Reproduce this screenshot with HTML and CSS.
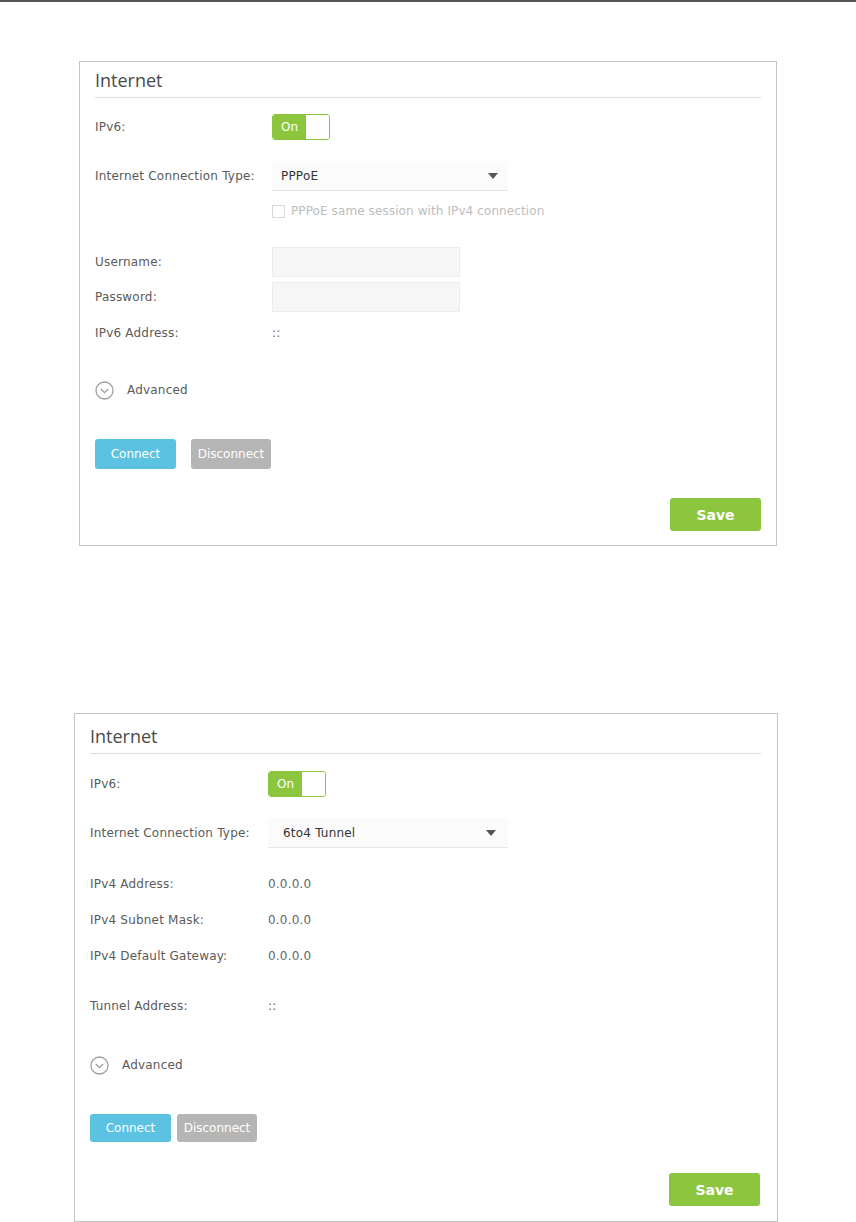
FILE: index.html
```html
<!DOCTYPE html>
<html lang="en">

<head>
    <meta charset="UTF-8">
    <title>Internet - IPv6</title>
    <link rel="stylesheet" href="styles.css">
</head>

<body>
    <div class="topline"></div>

    <!-- PPPoE -->
    <div class="panel panel-pppoe">
        <h2 class="panel-title">Internet</h2>

        <div class="row r-ipv6">
            <span class="label">IPv6:</span>
            <div class="toggle"><span class="toggle-on">On</span><span class="toggle-knob"></span></div>
        </div>

        <div class="row r-type">
            <span class="label">Internet Connection Type:</span>
            <div class="select"><span>PPPoE</span><span class="caret"></span></div>
        </div>

        <div class="row r-check">
            <span class="label"></span>
            <label class="check"><span class="box"></span>PPPoE same session with IPv4 connection</label>
        </div>

        <div class="row r-user">
            <span class="label">Username:</span>
            <input type="text" class="field">
        </div>

        <div class="row r-pass">
            <span class="label">Password:</span>
            <input type="password" class="field">
        </div>

        <div class="row r-addr">
            <span class="label">IPv6 Address:</span>
            <span class="value">::</span>
        </div>

        <div class="advanced r-adv">
            <svg width="19" height="19" viewBox="0 0 19 19">
                <circle cx="9.5" cy="9.5" r="8.5" fill="none" stroke="#a39e99" stroke-width="1.3"/>
                <path d="M5.8 8 L9.5 11.6 L13.2 8" fill="none" stroke="#a39e99" stroke-width="1.3"/>
            </svg>
            <span>Advanced</span>
        </div>

        <div class="buttons r-btn">
            <button class="btn btn-connect">Connect</button>
            <button class="btn btn-disconnect">Disconnect</button>
        </div>

        <div class="save-row r-save">
            <button class="btn-save">Save</button>
        </div>
    </div>

    <!-- 6to4 Tunnel -->
    <div class="panel panel-tunnel">
        <h2 class="panel-title">Internet</h2>

        <div class="row r-ipv6">
            <span class="label">IPv6:</span>
            <div class="toggle"><span class="toggle-on">On</span><span class="toggle-knob"></span></div>
        </div>

        <div class="row r-type">
            <span class="label">Internet Connection Type:</span>
            <div class="select"><span>6to4 Tunnel</span><span class="caret"></span></div>
        </div>

        <div class="row r-v4">
            <span class="label">IPv4 Address:</span>
            <span class="value">0.0.0.0</span>
        </div>

        <div class="row r-mask">
            <span class="label">IPv4 Subnet Mask:</span>
            <span class="value">0.0.0.0</span>
        </div>

        <div class="row r-gw">
            <span class="label">IPv4 Default Gateway:</span>
            <span class="value">0.0.0.0</span>
        </div>

        <div class="row r-tunnel">
            <span class="label">Tunnel Address:</span>
            <span class="value">::</span>
        </div>

        <div class="advanced r-adv">
            <svg width="19" height="19" viewBox="0 0 19 19">
                <circle cx="9.5" cy="9.5" r="8.5" fill="none" stroke="#a39e99" stroke-width="1.3"/>
                <path d="M5.8 8 L9.5 11.6 L13.2 8" fill="none" stroke="#a39e99" stroke-width="1.3"/>
            </svg>
            <span>Advanced</span>
        </div>

        <div class="buttons r-btn">
            <button class="btn btn-connect">Connect</button>
            <button class="btn btn-disconnect">Disconnect</button>
        </div>

        <div class="save-row r-save">
            <button class="btn-save">Save</button>
        </div>
    </div>
</body>

</html>
```

FILE: styles.css
```css
body {
    margin: 0;
    background-color: #fff;
    font-family: "DejaVu Sans", Verdana, sans-serif;
    font-size: 12px;
    letter-spacing: 0.2px;
    color: #5a5a5a;
}

.topline {
    height: 2px;
    background-color: #555;
}

/* panels */
.panel {
    box-sizing: border-box;
    border: 1px solid #c4c4c4;
    padding: 0 15px 0 15px;
}

.panel-pppoe {
    margin: 59px 0 0 79px;
    width: 698px;
    height: 485px;
}

.panel-tunnel {
    margin: 167px 0 0 74px;
    width: 704px;
    height: 509px;
    padding: 0 16px 0 15px;
}

.panel-title {
    margin: 0;
    font-family: "Open Sans", sans-serif;
    font-weight: normal;
    font-size: 18px;
    letter-spacing: 0;
    color: #4a4a4a;
    height: 35px;
    line-height: 36px;
    border-bottom: 1px solid #dcdcdc;
}

.panel-tunnel .panel-title {
    height: 39px;
    line-height: 44px;
}

/* rows */
.row {
    display: flex;
    align-items: center;
    height: 30px;
}

.label {
    width: 177px;
    flex-shrink: 0;
}

.panel-tunnel .label {
    width: 178px;
}

.value {
    color: #666;
}

.panel-pppoe .r-ipv6 { margin-top: 14px; }
.panel-pppoe .r-type { margin-top: 19px; }
.panel-pppoe .r-check { margin-top: 5px; height: 30px; }
.panel-pppoe .r-user { margin-top: 21px; }
.panel-pppoe .r-pass { margin-top: 5px; }
.panel-pppoe .r-addr { margin-top: 6px; }
.panel-pppoe .r-adv { margin-top: 32px; }
.panel-pppoe .r-btn { margin-top: 39px; }
.panel-pppoe .r-save { margin-top: 29px; }

.panel-tunnel .r-ipv6 { margin-top: 15px; }
.panel-tunnel .r-type { margin-top: 19px; }
.panel-tunnel .r-v4 { margin-top: 21px; }
.panel-tunnel .r-mask { margin-top: 6px; }
.panel-tunnel .r-gw { margin-top: 6px; }
.panel-tunnel .r-tunnel { margin-top: 20px; }
.panel-tunnel .r-adv { margin-top: 34px; }
.panel-tunnel .r-btn { margin-top: 39px; }
.panel-tunnel .r-save { margin-top: 31px; }

/* toggle */
.toggle {
    display: flex;
    width: 58px;
    height: 26px;
    box-sizing: border-box;
    border: 1px solid #8cc63f;
    border-radius: 3px;
    overflow: hidden;
}

.toggle-on {
    width: 33px;
    background-color: #8cc63f;
    color: #fff;
    font-size: 12px;
    letter-spacing: 0;
    line-height: 24px;
    text-align: center;
}

.toggle-knob {
    flex: 1;
    background-color: #fff;
}

/* select */
.select {
    box-sizing: border-box;
    width: 236px;
    height: 30px;
    display: flex;
    align-items: center;
    justify-content: space-between;
    padding: 0 10px 0 9px;
    background-color: #fbfbfb;
    border-bottom: 1px solid #e6e6e6;
    color: #333;
}

.panel-tunnel .select {
    width: 240px;
    padding-left: 15px;
    padding-right: 12px;
}

.caret {
    width: 0;
    height: 0;
    border-left: 5px solid transparent;
    border-right: 5px solid transparent;
    border-top: 6px solid #555;
}

/* checkbox */
.check {
    display: flex;
    align-items: center;
    color: #bdbdbd;
    letter-spacing: 0.1px;
}

.box {
    width: 11px;
    height: 11px;
    border: 1px solid #d8d8d8;
    margin-right: 6px;
}

/* text inputs */
.field {
    box-sizing: border-box;
    width: 188px;
    height: 30px;
    border: 1px solid #ececec;
    background-color: #f6f6f6;
    margin: 0;
}

/* advanced */
.advanced {
    display: flex;
    align-items: center;
    height: 20px;
}

.advanced svg {
    margin-right: 13px;
}

/* buttons */
.buttons {
    display: flex;
    gap: 15px;
    height: 30px;
}

.panel-tunnel .buttons {
    gap: 6px;
    height: 28px;
}

.btn {
    width: 81px;
    height: 100%;
    border: none;
    border-radius: 3px;
    color: #fff;
    font-family: "DejaVu Sans", Verdana, sans-serif;
    font-size: 12px;
    cursor: pointer;
}

.btn-connect {
    background-color: #5bc2e1;
}

.btn-disconnect {
    width: 80px;
    background-color: #b5b5b5;
}

.save-row {
    display: flex;
    justify-content: flex-end;
}

.btn-save {
    width: 91px;
    height: 33px;
    border: none;
    border-radius: 3px;
    background-color: #8cc63f;
    color: #fff;
    font-family: "DejaVu Sans", Verdana, sans-serif;
    font-weight: bold;
    font-size: 14px;
}

.panel-tunnel .save-row {
    padding-right: 1px;
}
```
